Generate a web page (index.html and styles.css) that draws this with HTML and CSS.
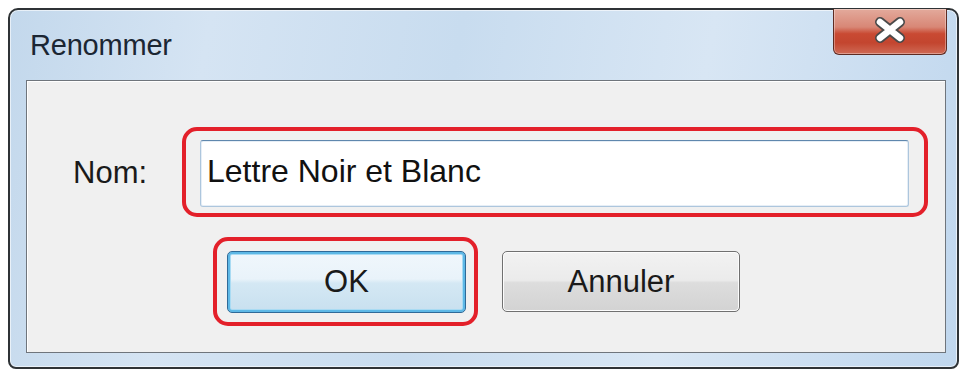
FILE: index.html
```html
<!DOCTYPE html>
<html lang="fr">
<head>
<meta charset="utf-8">
<title>Renommer</title>
<link rel="stylesheet" href="styles.css">
</head>
<body>
<div class="window">
  <div class="titlebar">
    <div class="title">Renommer</div>
    <div class="close">
      <svg width="36" height="26" viewBox="0 0 36 26">
        <path d="M8 5 L28 21 M28 5 L8 21" stroke="#4a4a4a" stroke-width="10" stroke-linecap="round"/>
        <path d="M8 5 L28 21 M28 5 L8 21" stroke="#ffffff" stroke-width="6.5" stroke-linecap="round"/>
      </svg>
    </div>
  </div>
  <div class="panel">
    <div class="row-name">
      <span class="label">Nom:</span>
      <div class="highlight field-hl">
        <div class="input">Lettre Noir et Blanc</div>
      </div>
    </div>
    <div class="row-buttons">
      <div class="highlight ok-hl">
        <div class="btn btn-ok">OK</div>
      </div>
      <div class="btn btn-cancel">Annuler</div>
    </div>
  </div>
</div>
</body>
</html>
```
FILE: styles.css
```css
* { box-sizing: border-box; }
html, body { margin: 0; padding: 0; background: #ffffff; }
body {
  font-family: "Liberation Sans", Arial, sans-serif;
  width: 967px;
  height: 376px;
  overflow: hidden;
}
.window {
  margin: 8px 0 0 8px;
  width: 951px;
  height: 361px;
  border: 2px solid #2f3336;
  border-radius: 10px 10px 8px 8px;
  background: linear-gradient(100deg, #c3d8ec 0%, #d5e4f3 20%, #c8dcef 45%, #d8e6f4 70%, #c0d7ee 100%);
  display: flex;
  flex-direction: column;
  box-shadow: inset 0 0 0 1px rgba(255,255,255,0.6);
}
.titlebar {
  height: 70px;
  display: flex;
  justify-content: space-between;
  align-items: flex-start;
}
.title {
  margin: 18px 0 0 20px;
  font-size: 29px;
  line-height: 34px;
  color: #1b2633;
  letter-spacing: -0.2px;
}
.close {
  width: 114px;
  height: 46px;
  margin: -1px 10px 0 0;
  border: 1px solid #5e2b22;
  border-top: none;
  border-radius: 0 0 6px 6px;
  background: linear-gradient(180deg, #e3aa9c 0%, #d88776 40%, #c94a33 55%, #c3452f 75%, #cf6a55 100%);
  display: flex;
  align-items: center;
  justify-content: center;
  box-shadow: inset 0 0 0 1px rgba(255,255,255,0.35);
}
.close svg { display: block; margin-top: -4px; }
.panel {
  flex: 1;
  margin: 0 11px 14px 16px;
  background: #f0f0f0;
  border: 1px solid #6f757c;
  box-shadow: inset 1px 1px 0 #ffffff;
  display: flex;
  flex-direction: column;
}
.row-name {
  display: flex;
  align-items: center;
  margin-top: 46px;
}
.label {
  margin-left: 46px;
  width: 109px;
  font-size: 31px;
  color: #1a1a1a;
  padding-top: 2px;
}
.highlight {
  border: 4px solid #e3202a;
  border-radius: 15px;
}
.field-hl {
  width: 746px;
  height: 90px;
  padding: 9px 15px 6px 14px;
}
.input {
  height: 67px;
  background: #ffffff;
  border: 1px solid #adc6dd;
  border-top-color: #5f87ad;
  border-radius: 3px;
  box-shadow: inset 0 0 0 1px #e6eef6;
  font-size: 32px;
  color: #111111;
  padding: 13px 0 0 6px;
  line-height: 34px;
}
.row-buttons {
  display: flex;
  align-items: center;
  margin: 20px 0 0 186px;
}
.ok-hl {
  width: 265px;
  height: 89px;
  padding: 10px 8px 9px 10px;
}
.btn {
  font-size: 31px;
  color: #1a1a1a;
  display: flex;
  align-items: center;
  justify-content: center;
  border-radius: 5px;
}
.btn-ok {
  width: 239px;
  height: 62px;
  border: 1px solid #2f6a98;
  background: linear-gradient(180deg, #f0f7fc 0%, #e9f3fa 45%, #d4e8f4 52%, #c8e0ef 100%);
  box-shadow: inset 0 0 0 2px #5db8e6, inset 0 0 0 3px #a9dbf3;
}
.btn-cancel {
  margin-left: 24px;
  width: 238px;
  height: 61px;
  border: 1px solid #707070;
  background: linear-gradient(180deg, #f2f2f2 0%, #ebebeb 48%, #dddddd 52%, #d3d3d3 100%);
  box-shadow: inset 0 0 0 1px #fcfcfc;
}
```
